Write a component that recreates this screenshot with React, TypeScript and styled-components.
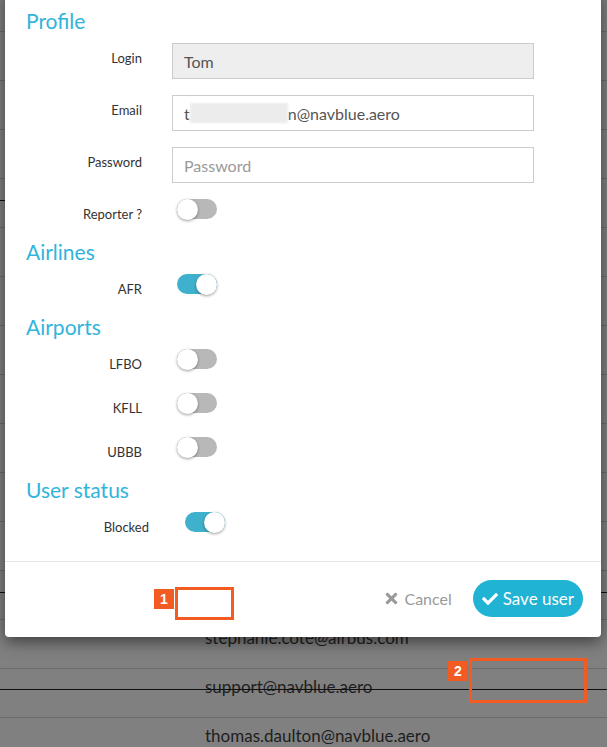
import React from "react";
import styled, { createGlobalStyle } from "styled-components";
import { FaCheck, FaTimes } from "react-icons/fa";

const Global = createGlobalStyle`
  html, body { margin: 0; padding: 0; }
  body {
    width: 607px;
    height: 747px;
    overflow: hidden;
    font-family: Lato, "Open Sans", sans-serif;
    background: #808080;
  }
  * { box-sizing: border-box; }
`;

const Page = styled.div`
  position: relative;
  width: 607px;
  height: 747px;
  overflow: hidden;
  background: #808080;
`;

const Rows = styled.div`
  display: flex;
  flex-direction: column;
  margin-top: -17px;
`;

const TableRow = styled.div`
  height: 49px;
  flex: none;
  border-bottom: 1px solid #6b6b6b;
  padding-left: 205px;
  font-size: 17px;
  line-height: 36px;
  color: #1e1e1e;
  white-space: nowrap;
`;

const HLine = styled.div<{ $top: number; $width?: number }>`
  position: absolute;
  left: 0;
  top: ${(p) => p.$top}px;
  width: ${(p) => (p.$width ? `${p.$width}px` : "100%")};
  height: 1px;
  background: #111;
`;

const Modal = styled.div`
  position: absolute;
  left: 5px;
  top: -10px;
  width: 596px;
  background: #fff;
  border-radius: 0 0 4px 4px;
  box-shadow: 0 5px 15px rgba(0, 0, 0, 0.5);
  display: flex;
  flex-direction: column;
`;

const Body = styled.div`
  padding: 19px 0 21px 21px;
  display: flex;
  flex-direction: column;
`;

const Heading = styled.h3<{ $first?: boolean }>`
  margin: ${(p) => (p.$first ? "0" : "13px")} 0 10px 0;
  font-size: 21px;
  line-height: 24px;
  font-weight: 400;
  color: #31b4dc;
`;

const FormRow = styled.div<{ $wide?: boolean; $toggle?: boolean }>`
  display: grid;
  grid-template-columns: ${(p) => (p.$wide ? "123px" : "116px")} 362px;
  column-gap: ${(p) => (p.$wide ? "31px" : "30px")};
  min-height: ${(p) => (p.$toggle ? "28px" : "36px")};
  margin-bottom: 16px;
  &:last-child { margin-bottom: 0; }
`;

const Group = styled.div`
  display: flex;
  flex-direction: column;
`;

const Label = styled.label`
  text-align: right;
  padding-top: 7px;
  font-size: 13px;
  line-height: 16px;
  color: #333;
`;

const Input = styled.input<{ $disabled?: boolean }>`
  width: 362px;
  height: 36px;
  border: 1px solid #ccc;
  background: ${(p) => (p.$disabled ? "#eeeeee" : "#fff")};
  padding: 0 11px;
  font-family: inherit;
  font-size: 16px;
  color: #555;
  outline: none;
  &::placeholder { color: #999; }
`;

const FakeInput = styled.div`
  width: 362px;
  height: 36px;
  border: 1px solid #ccc;
  background: #fff;
  padding: 0 11px;
  font-size: 16px;
  color: #555;
  display: flex;
  align-items: center;
  white-space: nowrap;
`;

const Blur = styled.span`
  display: inline-block;
  width: 98px;
  height: 20px;
  background: #ececec;
  filter: blur(1px);
`;

const Track = styled.div<{ $on?: boolean }>`
  position: relative;
  margin-left: 5px;
  width: 40px;
  height: 20px;
  border-radius: 10px;
  background: ${(p) => (p.$on ? "#3fb1cc" : "#b8b8b8")};
`;

const Knob = styled.div<{ $on?: boolean }>`
  position: absolute;
  top: -0.5px;
  left: ${(p) => (p.$on ? "19px" : "0")};
  width: 21px;
  height: 21px;
  border-radius: 50%;
  background: #fff;
  box-shadow: 0 1px 3px rgba(0, 0, 0, 0.4);
`;

const Footer = styled.div`
  border-top: 1px solid #e5e5e5;
  padding: 18px 18px 20px;
  display: flex;
  justify-content: flex-end;
  align-items: center;
  gap: 21px;
`;

const CancelButton = styled.button`
  display: flex;
  align-items: center;
  gap: 4px;
  border: none;
  background: none;
  padding: 0;
  font-family: inherit;
  font-size: 16px;
  color: #9a9a9a;
  white-space: nowrap;
  svg { flex: none; }
`;

const SaveButton = styled.button`
  display: flex;
  align-items: center;
  justify-content: center;
  gap: 5px;
  height: 37px;
  min-width: 110px;
  padding: 0 9px;
  border: none;
  border-radius: 19px;
  background: #20b3d4;
  color: #fff;
  font-family: inherit;
  font-size: 17px;
  white-space: nowrap;
  svg { flex: none; }
`;

const Annotation = styled.div<{ $x: number; $y: number; $w: number; $h: number }>`
  position: absolute;
  left: ${(p) => p.$x}px;
  top: ${(p) => p.$y}px;
  width: ${(p) => p.$w}px;
  height: ${(p) => p.$h}px;
  border: 3px solid #f25c22;
`;

const Badge = styled.div<{ $x: number; $y: number }>`
  position: absolute;
  left: ${(p) => p.$x}px;
  top: ${(p) => p.$y}px;
  width: 20px;
  height: 20px;
  background: #f25c22;
  color: #fff;
  font-family: "Liberation Sans", Arial, sans-serif;
  font-weight: 700;
  font-size: 14px;
  display: flex;
  align-items: center;
  justify-content: center;
`;

const Toggle = ({ on }: { on?: boolean }) => (
  <Track $on={on}>
    <Knob $on={on} />
  </Track>
);

const rowTexts: string[] = Array(13).fill("");
rowTexts.push("stephanie.cote@airbus.com", "support@navblue.aero", "thomas.daulton@navblue.aero");

export default function App() {
  return (
    <Page>
      <Global />
      <Rows>
        {rowTexts.map((t, i) => (
          <TableRow key={i}>{t}</TableRow>
        ))}
      </Rows>
      <HLine $top={200} $width={10} />
      <HLine $top={592} />
      <HLine $top={689} />

      <Modal>
        <Body>
          <Heading $first>Profile</Heading>
          <Group>
            <FormRow>
              <Label>Login</Label>
              <Input $disabled readOnly value="Tom" />
            </FormRow>
            <FormRow>
              <Label>Email</Label>
              <FakeInput>
                t<Blur />n@navblue.aero
              </FakeInput>
            </FormRow>
            <FormRow>
              <Label>Password</Label>
              <Input type="password" placeholder="Password" />
            </FormRow>
            <FormRow $toggle>
              <Label>Reporter ?</Label>
              <Toggle />
            </FormRow>
          </Group>

          <Heading>Airlines</Heading>
          <Group>
            <FormRow $toggle>
              <Label>AFR</Label>
              <Toggle on />
            </FormRow>
          </Group>

          <Heading>Airports</Heading>
          <Group>
            <FormRow $toggle>
              <Label>LFBO</Label>
              <Toggle />
            </FormRow>
            <FormRow $toggle>
              <Label>KFLL</Label>
              <Toggle />
            </FormRow>
            <FormRow $toggle>
              <Label>UBBB</Label>
              <Toggle />
            </FormRow>
          </Group>

          <Heading>User status</Heading>
          <Group>
            <FormRow $toggle $wide>
              <Label>Blocked</Label>
              <Toggle on />
            </FormRow>
          </Group>
        </Body>
        <Footer>
          <CancelButton>
            <FaTimes size={17} />
            Cancel
          </CancelButton>
          <SaveButton>
            <FaCheck size={16} />
            Save user
          </SaveButton>
        </Footer>
      </Modal>

      <Annotation $x={175} $y={587} $w={59} $h={33} />
      <Badge $x={154} $y={589}>1</Badge>
      <Annotation $x={469} $y={658} $w={118} $h={45} />
      <Badge $x={448} $y={661}>2</Badge>
    </Page>
  );
}
